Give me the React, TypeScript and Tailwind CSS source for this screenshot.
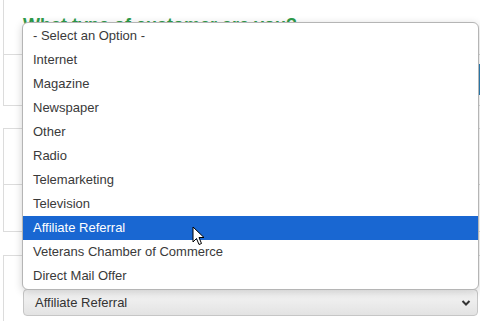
const options = [
  "- Select an Option -",
  "Internet",
  "Magazine",
  "Newspaper",
  "Other",
  "Radio",
  "Telemarketing",
  "Television",
  "Affiliate Referral",
  "Veterans Chamber of Commerce",
  "Direct Mail Offer",
];

const Cursor = () => (
  <svg width="14" height="21" viewBox="0 0 14 21" className="absolute left-[192px] top-[226px]">
    <path
      d="M1 1 L1 16 L4.5 12.5 L7 18.5 L9.5 17.5 L7 11.5 L12 11.5 Z"
      fill="#fff"
      stroke="#000"
      strokeWidth="1"
      strokeLinejoin="round"
    />
  </svg>
);

export default function App() {
  return (
    <div
      className="relative w-[480px] h-[321px] overflow-hidden bg-white text-[#333]"
      style={{ fontFamily: '"Liberation Sans", Arial, sans-serif' }}
    >
      {/* page behind the popup */}
      <div className="ml-[3px] border-l border-b border-[#dcdcdc] h-[106px]">
        <div className="h-[55px] border-b border-[#dcdcdc] pl-[19px] pt-[16px]">
          <h2 className="text-[18px] font-bold text-[#2e9c4a] leading-none">
            What type of customer are you?
          </h2>
        </div>
        <div className="flex justify-end pt-[9px]">
          <div className="w-[3px] h-[31px] bg-[#2d7fb3]" />
        </div>
      </div>
      <div className="mt-[22px] ml-[3px] border-l border-t border-b border-[#dcdcdc] h-[104px]">
        <div className="h-[56px] border-b border-[#dcdcdc] pl-[18px] pt-[21px]">
          <div className="w-[2px] h-[10px] bg-[#c9b26a]" />
        </div>
        <div className="pl-[18px] pt-[10px]">
          <div className="w-[3px] h-[26px] bg-[#d7d7d7] rounded-l" />
        </div>
      </div>
      <div className="mt-[23px] ml-[3px] border-l border-t border-[#dcdcdc] h-[70px] pl-[19px] pt-[33px] pr-[2px]">
        <div className="flex items-center justify-between h-[27px] rounded-[4px] border border-[#c6c6c6] bg-gradient-to-b from-[#f6f6f6] to-[#e3e3e3] pl-[11px] pr-[6px] text-[13px]">
          <span>Affiliate Referral</span>
          <svg width="10" height="8" viewBox="0 0 10 8">
            <path d="M1.5 2 L5 5.5 L8.5 2" fill="none" stroke="#333" strokeWidth="2" />
          </svg>
        </div>
      </div>

      {/* open option list */}
      <div className="absolute left-[22px] top-[22px] w-[457px] rounded-[6px] border border-[#b5b5b5] bg-white shadow-[0_2px_8px_rgba(0,0,0,0.18)] overflow-hidden py-px">
        {options.map((o) => (
          <div
            key={o}
            className={
              o === "Affiliate Referral"
                ? "h-[24px] flex items-center pl-[10px] text-[13px] bg-[#1967d2] text-white"
                : "h-[24px] flex items-center pl-[10px] text-[13px] text-[#3a3a3a]"
            }
          >
            {o}
          </div>
        ))}
      </div>
      <Cursor />
    </div>
  );
}
